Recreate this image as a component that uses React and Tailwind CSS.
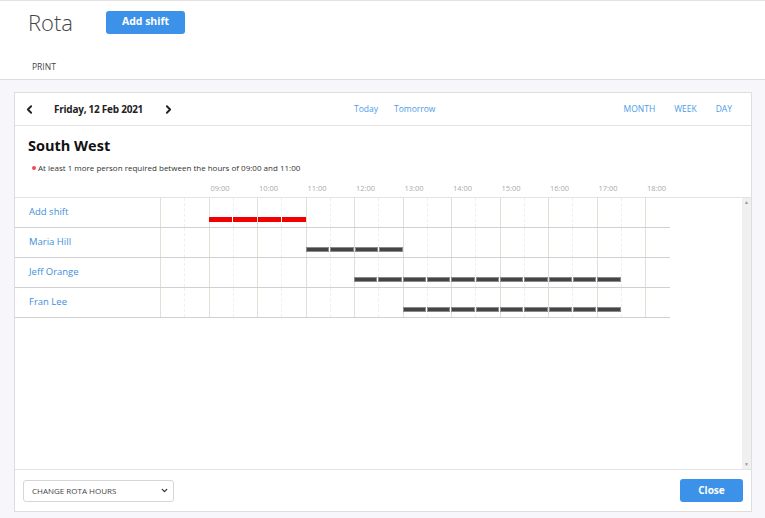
import { ChevronLeft, ChevronRight, ChevronDown } from "lucide-react"

const hours = ["09:00", "10:00", "11:00", "12:00", "13:00", "14:00", "15:00", "16:00", "17:00", "18:00"]

const rows = [
  { name: "Add shift", start: 3, span: 4, color: "red" },
  { name: "Maria Hill", start: 7, span: 4, color: "dark" },
  { name: "Jeff Orange", start: 9, span: 11, color: "dark" },
  { name: "Fran Lee", start: 11, span: 9, color: "dark" },
]

const cells = Array.from({ length: 21 }, (_, i) => i)

const Row = ({ row }) => {
  return (
    <div className="flex h-[30px] w-[655px] border-b border-[#d0d0d0]">
      <div className="w-[145px] pl-[14px] pt-[7px] text-[9.5px] text-[#3c8fdc]">{row.name}</div>
      <div className="grid grid-cols-[repeat(21,24.25px)] grid-rows-1 h-full">
        {cells.map((i) => (
          <div
            key={i}
            style={{ gridColumn: i + 1, gridRow: 1 }}
            className={i % 2 === 0 ? "border-l border-[#e2dfd6]" : "border-l border-dashed border-[#efefef]"}
          />
        ))}
        <div
          style={{ gridColumn: `${row.start} / span ${row.span}`, gridRow: 1 }}
          className="flex gap-[1px] h-[5px] mt-[19px] z-10"
        >
          {Array.from({ length: row.span }, (_, i) => (
            <div
              key={i}
              className={row.color === "red" ? "flex-1 bg-[#f20000]" : "flex-1 bg-[#454545] border border-[#8a8a8a]"}
            />
          ))}
        </div>
      </div>
    </div>
  )
}

const App = () => {
  return (
    <div className="w-[765px] h-[518px] bg-[#f7f7fb] font-['Open_Sans',sans-serif] text-[#333] overflow-hidden">
      {/* Top bar */}
      <div className="bg-white border-t border-[#e3e3e3] border-b border-b-[#dcdcdc] h-[80px]">
        <div className="flex items-center h-[42px] pl-[28px]">
          <div className="text-[22px] font-light text-[#444] leading-none">Rota</div>
          <button className="ml-[33px] w-[79px] h-[23px] rounded-[3px] bg-[#3b92e8] text-white text-[10.5px] font-bold">Add shift</button>
        </div>
        <div className="pl-[32px] pt-[18px] text-[8.5px] text-[#444]">PRINT</div>
      </div>

      {/* Panel */}
      <div className="mt-[12px] ml-[14px] w-[738px] h-[420px] bg-white border border-[#dedede] flex flex-col">
        <div className="flex items-center h-[33px] border-b border-[#e3e3e3] shrink-0">
          <div className="w-[325px] pl-[8px] flex items-center">
            <ChevronLeft size={13} strokeWidth={3.5} className="text-[#222]" />
            <div className="ml-[18px] text-[10px] tracking-[-0.25px] font-bold text-[#222]">Friday, 12 Feb 2021</div>
            <ChevronRight size={13} strokeWidth={3.5} className="ml-[19px] text-[#222]" />
          </div>
          <div className="flex gap-[16px] pl-[14px] text-[8.5px] text-[#4a9de8]">
            <span>Today</span>
            <span>Tomorrow</span>
          </div>
          <div className="ml-auto flex gap-[19px] pr-[19px] text-[8.5px] text-[#4a9de8]">
            <span>MONTH</span>
            <span>WEEK</span>
            <span>DAY</span>
          </div>
        </div>

        <div className="h-[72px] shrink-0 border-b border-[#e3e3e3] flex flex-col">
          <div className="pl-[13px] pt-[10px] text-[14.5px] font-bold text-[#111] leading-[20px]">South West</div>
          <div className="pl-[17px] mt-[6px] flex items-center text-[8px] text-[#333]">
            <span className="w-[4px] h-[4px] rounded-full bg-[#f0475f] mr-[2px]" />
            At least 1 more person required between the hours of 09:00 and 11:00
          </div>
          <div className="mt-auto mb-[3px] flex">
            <div className="w-[145px]" />
            <div className="grid grid-cols-[repeat(21,24.25px)] text-[7.5px] text-[#aaa]">
              {hours.map((h, i) => (
                <div key={h} style={{ gridColumn: `${3 + i * 2} / span 2` }} className="pl-[2px] whitespace-nowrap">{h}</div>
              ))}
            </div>
          </div>
        </div>

        {/* Scroll body */}
        <div className="flex flex-1 min-h-0">
          <div className="flex-1">
            {rows.map((row) => (
              <Row key={row.name} row={row} />
            ))}
          </div>
          <div className="w-[9px] bg-[#f0f0f0] flex flex-col justify-between items-center py-[2px] text-[5px] text-[#999] leading-none">
            <span>▲</span>
            <span>▼</span>
          </div>
        </div>

        {/* Footer */}
        <div className="h-[42px] shrink-0 border-t border-[#e3e3e3] flex items-center justify-between pl-[8px] pr-[8px]">
          <div className="w-[151px] h-[22px] border border-[#d6d6d6] rounded-[3px] flex items-center justify-between pl-[8px] pr-[4px] text-[8px] text-[#444]">
            <span>CHANGE ROTA HOURS</span>
            <ChevronDown size={9} strokeWidth={3.5} className="text-[#333]" />
          </div>
          <button className="w-[63px] h-[23px] rounded-[3px] bg-[#3b92e8] text-white text-[10px] font-bold">Close</button>
        </div>
      </div>
    </div>
  )
}

export default App
